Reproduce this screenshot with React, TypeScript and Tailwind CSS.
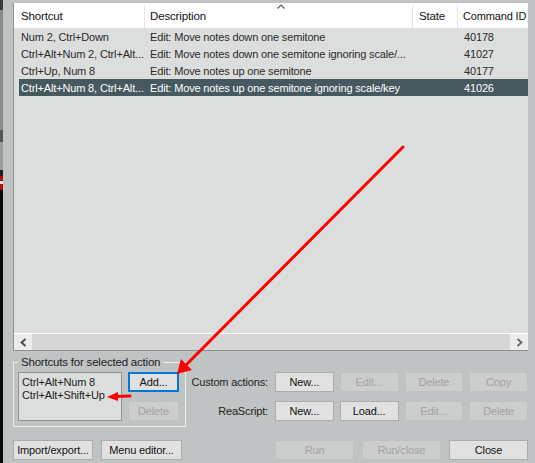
import React from "react";

type BtnProps = {
  label: string;
  disabled?: boolean;
  focused?: boolean;
  className?: string;
};

const Btn = ({ label, disabled, focused, className = "" }: BtnProps) => {
  let tone = "border border-[#adadad] bg-[#e1e1e1] text-[#111]";
  if (disabled) tone = "border border-[#c0c2c2] bg-[#cccdcd] text-[#a2a4a4]";
  if (focused) tone = "border-2 border-[#0078d7] bg-[#e1e1e1] text-[#111]";
  return (
    <div
      className={`flex h-[20px] items-center justify-center whitespace-nowrap pt-[1px] text-[11px] leading-none ${tone} ${className}`}
    >
      {label}
    </div>
  );
};

const rows = [
  ["Num 2, Ctrl+Down", "Edit: Move notes down one semitone", "", "40178"],
  ["Ctrl+Alt+Num 2, Ctrl+Alt...", "Edit: Move notes down one semitone ignoring scale/...", "", "41027"],
  ["Ctrl+Up, Num 8", "Edit: Move notes up one semitone", "", "40177"],
  ["Ctrl+Alt+Num 8, Ctrl+Alt...", "Edit: Move notes up one semitone ignoring scale/key", "", "41026"],
];

const App = () => {
  return (
    <div
      className="relative flex h-[463px] w-[535px] overflow-hidden whitespace-nowrap bg-[#bfc3c3] text-[11px] tracking-[-0.15px] text-[#1c1c1c]"
      style={{ fontFamily: '"Liberation Sans", Arial, sans-serif' }}
    >
      {/* strip of the app behind the window */}
      <div className="flex w-[3px] flex-col">
        <div className="h-[10px] bg-[#3a3a3a]" />
        <div className="h-[120px] bg-[#8a8c8c]" />
        <div className="h-[12px] bg-[#555]" />
        <div className="h-[28px] bg-[#9a9c9c]" />
        <div className="h-[6px] bg-[#202020]" />
        <div className="h-[5px] bg-[#b01010]" />
        <div className="h-[3px] bg-[#e0e0e0]" />
        <div className="h-[6px] bg-[#b01010]" />
        <div className="flex-1 bg-[#0a0a0a]" />
      </div>

      <div className="flex flex-1 flex-col pl-[10px] pr-[7px] pt-[3px]">
        {/* action list */}
        <div className="flex h-[348px] flex-col border-b border-l border-[#8c9090] bg-[#dcdedd]">
          <div className="relative flex h-[25px] items-center bg-white pt-[2px] text-[11.5px] text-[#111]">
            <div className="flex h-full w-[131px] items-center border-r border-[#e3e3e3] pl-[7px]">Shortcut</div>
            <div className="flex h-full w-[268px] items-center border-r border-[#e3e3e3] pl-[5px]">Description</div>
            <div className="flex h-full w-[45px] items-center border-r border-[#e3e3e3] pl-[6px]">State</div>
            <div className="flex h-full flex-1 items-center pl-[5px] text-[11px]">Command ID</div>
            <svg className="absolute left-[263px] top-[1px]" width="8" height="5" viewBox="0 0 8 5">
              <polyline points="0.5,4.5 4,1 7.5,4.5" fill="none" stroke="#555" strokeWidth="1.2" />
            </svg>
          </div>
          {rows.map((r, i) => {
            const sel = i === 3;
            return (
              <div key={i} className="flex h-[17px] items-center pl-[5px]">
                <div
                  className={`flex h-full flex-1 items-center pt-[1px] ${sel ? "bg-[#46595f] text-white" : "text-[#2a2a2a]"}`}
                >
                  <div className="w-[126px] overflow-hidden pl-[2px]">{r[0]}</div>
                  <div className="w-[268px] overflow-hidden pl-[5px]">{r[1]}</div>
                  <div className="w-[45px]">{r[2]}</div>
                  <div className="flex-1 pl-[6px]">{r[3]}</div>
                </div>
              </div>
            );
          })}
          <div className="flex-1" />
          <div className="flex h-[17px] border-t border-white bg-[#ececec]">
            <div className="flex w-[18px] items-center justify-center">
              <svg width="7" height="9" viewBox="0 0 7 9">
                <polyline points="5.5,1 1.5,4.5 5.5,8" fill="none" stroke="#444" strokeWidth="1.8" />
              </svg>
            </div>
            <div className="flex-1 bg-[#d6d6d6]" />
            <div className="flex w-[18px] items-center justify-center">
              <svg width="7" height="9" viewBox="0 0 7 9">
                <polyline points="1.5,1 5.5,4.5 1.5,8" fill="none" stroke="#666" strokeWidth="1.8" />
              </svg>
            </div>
          </div>
        </div>

        {/* shortcuts + custom actions */}
        <div className="mt-[5px] flex items-start">
          <fieldset className="w-[173px] border border-[#eceeee] pb-[5px] pl-[4px] pr-[5px]">
            <legend className="px-[3px] text-[11.5px] leading-[13px] tracking-[-0.2px] text-[#222]">
              Shortcuts for selected action
            </legend>
            <div className="mt-[3px] flex gap-[6px]">
              <div className="h-[49px] w-[104px] border border-[#8e9292] bg-[#dcdedd] pl-[3px] pt-[3px] leading-[13px] text-[#222]">
                <div>Ctrl+Alt+Num 8</div>
                <div>Ctrl+Alt+Shift+Up</div>
              </div>
              <div className="flex w-[51px] flex-col gap-[9px]">
                <Btn label="Add..." focused />
                <Btn label="Delete" disabled />
              </div>
            </div>
          </fieldset>

          <div className="flex flex-1 flex-col gap-[9px] pt-[16px]">
            <div className="flex items-center justify-end">
              <div className="mr-[7px] text-[#222]">Custom actions:</div>
              <div className="grid w-[253px] grid-cols-4 gap-x-[6px]">
                <Btn label="New..." />
                <Btn label="Edit..." disabled />
                <Btn label="Delete" disabled />
                <Btn label="Copy" disabled />
              </div>
            </div>
            <div className="flex items-center justify-end">
              <div className="mr-[7px] text-[#222]">ReaScript:</div>
              <div className="grid w-[253px] grid-cols-4 gap-x-[6px]">
                <Btn label="New..." />
                <Btn label="Load..." />
                <Btn label="Edit..." disabled />
                <Btn label="Delete" disabled />
              </div>
            </div>
          </div>
        </div>

        {/* bottom buttons */}
        <div className="mt-[13px] flex justify-between">
          <div className="flex gap-[8px]">
            <Btn label="Import/export..." className="w-[80px]" />
            <Btn label="Menu editor..." className="w-[81px]" />
          </div>
          <div className="flex gap-[8px]">
            <Btn label="Run" disabled className="w-[79px]" />
            <Btn label="Run/close" disabled className="w-[79px]" />
            <Btn label="Close" className="w-[79px]" />
          </div>
        </div>
      </div>

      {/* red annotation arrows */}
      <svg className="pointer-events-none absolute left-0 top-0" width="535" height="463" viewBox="0 0 535 463">
        <line x1="403" y1="147" x2="185" y2="366" stroke="#f00" strokeWidth="3" strokeLinecap="round" />
        <polygon points="177,374 181,359 192,370" fill="#f00" />
        <line x1="130" y1="396" x2="116" y2="396.5" stroke="#f00" strokeWidth="3" strokeLinecap="round" />
        <polygon points="107,397 118,392 118,401" fill="#f00" />
      </svg>
    </div>
  );
};

export default App;
